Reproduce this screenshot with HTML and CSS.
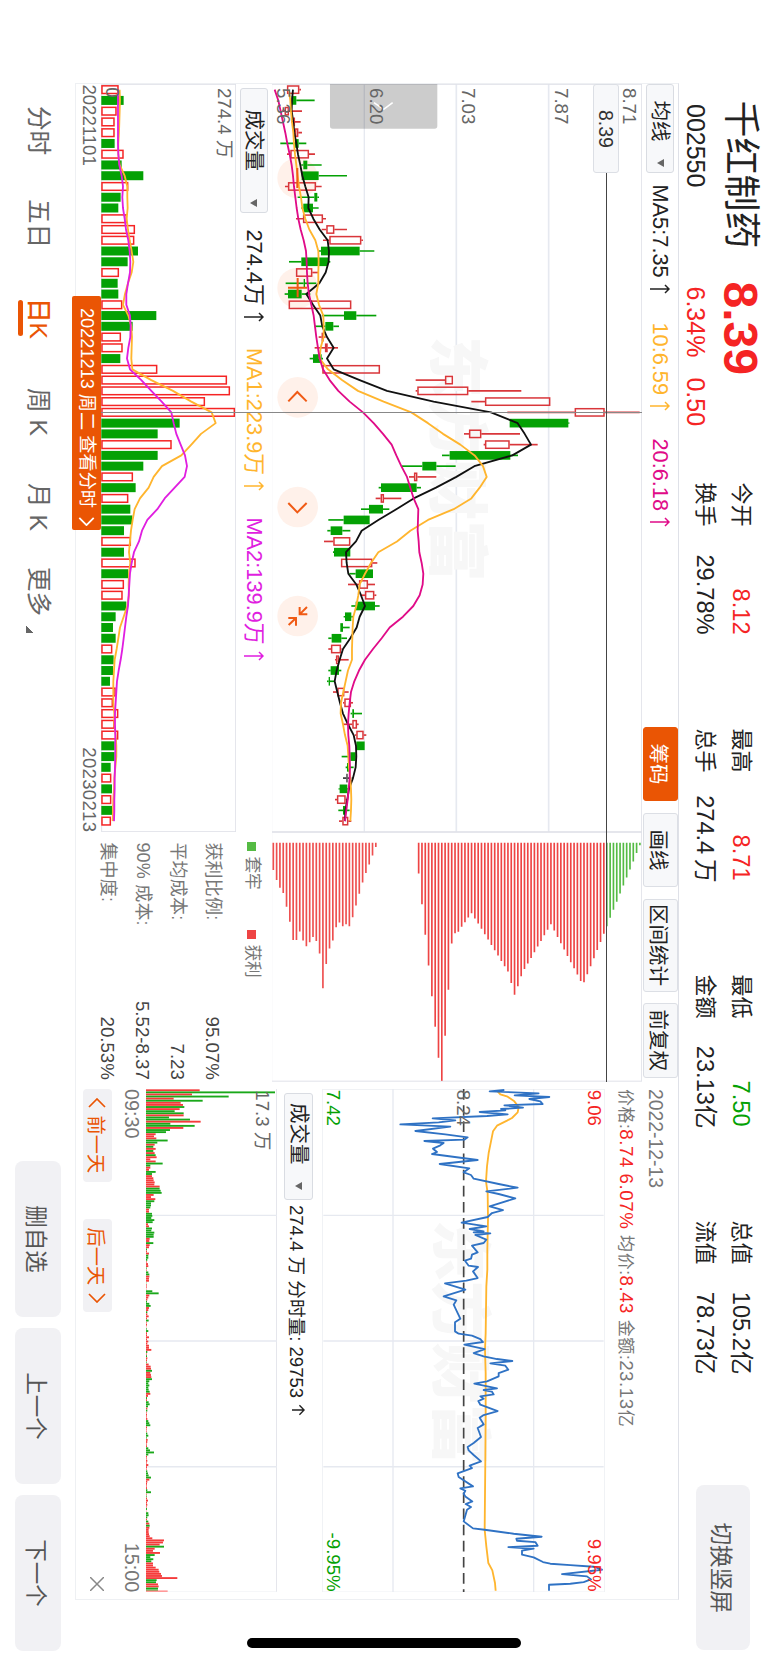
FILE: index.html
```html
<!DOCTYPE html>
<html lang="zh-CN">
<head>
    <meta charset="UTF-8">
    <meta name="viewport" content="width=device-width, initial-scale=1.0">
    <title>千红制药 002550</title>
    <link rel="stylesheet" href="styles.css">
</head>
<body>
    <div class="phone">
    <div class="screen">
        <header class="header">
            <div class="stock">
                <div class="stock-top"><span class="name">千红制药</span><b class="price">8.39</b></div>
                <div class="stock-sub"><span class="code">002550</span><span class="red">6.34%</span><span class="red change">0.50</span></div>
            </div>
            <ul class="stats">
                <li>
                    <p><span>今开</span><em class="red">8.12</em></p>
                    <p><span>换手</span><em>29.78%</em></p>
                </li>
                <li>
                    <p><span>最高</span><em class="red">8.71</em></p>
                    <p><span>总手</span><em class="wide">274.4&thinsp;万</em></p>
                </li>
                <li>
                    <p><span>最低</span><em class="green">7.50</em></p>
                    <p><span>金额</span><em class="wide">23.13亿</em></p>
                </li>
                <li>
                    <p><span>总值</span><em class="wide">105.2亿</em></p>
                    <p><span>流值</span><em class="wide">78.73亿</em></p>
                </li>
            </ul>
            <button class="switch">切换竖屏</button>
        </header>

        <main class="panel">
            <section class="left">
                <div class="toolbar">
                    <button class="select ma">均线<i class="caret"></i></button>
                    <span class="ind ind-a">MA5:7.35<svg class="up" viewBox="0 0 10 20"><path d="M5 20V1M1 5L5 1L9 5"/></svg></span>
                    <span class="ind ind-b yellow">10:6.59<svg class="up" viewBox="0 0 10 20"><path d="M5 20V1M1 5L5 1L9 5"/></svg></span>
                    <span class="ind ind-c pink">20:6.18<svg class="up" viewBox="0 0 10 20"><path d="M5 20V1M1 5L5 1L9 5"/></svg></span>
                    <div class="tools">
                        <button class="on">筹码</button>
                        <button>画线</button>
                        <button class="w93">区间统计</button>
                        <button>前复权</button>
                    </div>
                </div>
                <div class="row k-row">
                    <svg id="kline" class="k-chart" viewBox="0 0 2244 1112" preserveAspectRatio="none"></svg>
                    <svg id="chips" class="chip-chart" viewBox="0 0 747 1112" preserveAspectRatio="none"></svg>
                </div>
                <div class="row">
                    <div class="vol">
                        <div class="toolbar vol-bar">
                            <button class="select vol-select">成交量<i class="caret"></i></button>
                            <span class="ind ind-d">274.4万<svg class="up" viewBox="0 0 10 20"><path d="M5 20V1M1 5L5 1L9 5"/></svg></span>
                            <span class="ind ind-e yellow">MA1:223.9万<svg class="up" viewBox="0 0 10 20"><path d="M5 20V1M1 5L5 1L9 5"/></svg></span>
                            <span class="ind ind-f purple">MA2:139.9万<svg class="up" viewBox="0 0 10 20"><path d="M5 20V1M1 5L5 1L9 5"/></svg></span>
                        </div>
                        <svg id="volume" class="vol-chart" viewBox="0 0 2244 404" preserveAspectRatio="none"></svg>
                        <div class="dates"><span>20221101</span><span>20230213</span></div>
                    </div>
                    <div class="chip-info">
                        <div class="legend"><span class="lg">套牢</span><span class="lr">获利</span></div>
                        <dl>
                            <div><dt>获利比例:</dt><dd>95.07%</dd></div>
                            <div><dt>平均成本:</dt><dd>7.23</dd></div>
                            <div><dt>90% 成本:</dt><dd>5.52-8.37</dd></div>
                            <div><dt>集中度:</dt><dd>20.53%</dd></div>
                        </dl>
                    </div>
                </div>
                <div class="cross-v"></div>
                <div class="cross-h"></div>
                <div class="cross-price">8.39</div>
                <div class="cross-date">20221213 周二 查看分时<svg viewBox="0 0 10 18"><path d="M1 1L9 9L1 17"/></svg></div>
            </section>

            <section class="right">
                <p class="day">2022-12-13</p>
                <p class="info"><span>价格:</span><b>8.74 6.07%</b> <span>均价:</span><b>8.43</b> <span>金额:</span>23.13<span class="yi">亿</span></p>
                <svg id="trend" class="trend" viewBox="0 0 1510 849" preserveAspectRatio="none"></svg>
                <div class="trend-bar">
                    <button class="select trend-select">成交量<i class="caret"></i></button>
                    <span>274.4 万 分时量: 29753</span>
                    <svg class="up-s" viewBox="0 0 12 14"><path d="M6 14V1M1 6L6 1L11 6"/></svg>
                </div>
                <svg id="trendVol" class="trend-vol" viewBox="0 0 1510 395" preserveAspectRatio="none"></svg>
                <div class="times"><span>09:30</span><span>15:00</span></div>
                <div class="days">
                    <button><svg viewBox="0 0 10 18"><path d="M9 1L1 9L9 17"/></svg>前一天</button>
                    <button>后一天<svg viewBox="0 0 10 18"><path d="M1 1L9 9L1 17"/></svg></button>
                    <svg class="close" viewBox="0 0 14 14"><path d="M0 0L14 14M14 0L0 14"/></svg>
                </div>
            </section>
        </main>

        <footer class="footer">
            <ul class="tabs">
                <li>分时</li>
                <li>五日</li>
                <li class="active">日K</li>
                <li>周 K</li>
                <li>月 K</li>
                <li class="more">更多</li>
            </ul>
            <div class="actions">
                <button>删自选</button>
                <button>上一个</button>
                <button>下一个</button>
            </div>
        </footer>
        <div class="home"></div>
    </div>
    </div>

    <script src="script.js"></script>
</body>
</html>
```
FILE: styles.css
```css
* {
    margin: 0;
    padding: 0;
    list-style: none;
    box-sizing: border-box;
}
body {
    background-color: #fff;
    font-family: "Liberation Sans", "Noto Sans CJK SC", sans-serif;
    color: #222;
}
button {
    border: none;
    background: none;
    font-family: inherit;
    color: inherit;
    white-space: nowrap;
}
em, i {
    font-style: normal;
}
svg {
    display: block;
    flex: none;
}
path {
    fill: none;
    stroke: currentColor;
}
.red {
    color: #f52424;
}
.green {
    color: #04a104;
}
.yellow {
    color: #ffb52e;
}
.pink {
    color: #e00b88;
}
.purple {
    color: #e01ee0;
}

/* landscape layout shown on a portrait screen */
.phone {
    position: relative;
    width: 768px;
    height: 1662px;
    overflow: hidden;
}
.screen {
    position: relative;
    display: flex;
    flex-direction: column;
    width: 1662px;
    height: 768px;
    transform-origin: 0 0;
    transform: translateX(768px) rotate(90deg);
}

.header {
    display: flex;
    height: 89px;
    padding-left: 104px;
    white-space: nowrap;
}
.stock {
    width: 378.5px;
}
.stock-top {
    display: flex;
    align-items: center;
    height: 56px;
}
.name {
    margin-left: -3.5px;
    font-size: 37px;
    line-height: 56px;
}
.price {
    margin-left: 33px;
    font-size: 48px;
    line-height: 56px;
    color: #f52424;
}
.stock-sub {
    display: flex;
    font-size: 25px;
    line-height: 32px;
}
.code {
    width: 182.5px;
}
.change {
    margin-left: 20px;
}
.stats {
    display: flex;
    padding-top: 9px;
    font-size: 23.6px;
    gap: 94px;
}
.stats li {
    width: 152px;
}
.stats p {
    display: flex;
    justify-content: space-between;
    height: 36px;
    line-height: 36px;
}
.stats p span {
    font-size: 22px;
}
.stats .wide {
    margin-right: -2px;
}
.switch {
    width: 165.3px;
    height: 54px;
    margin: 18px 0 0 112.5px;
    border-radius: 8px;
    background-color: #f1f1f4;
    font-size: 22.6px;
    color: #555;
}

.panel {
    display: flex;
    height: 603.5px;
    width: 1516.5px;
    margin-left: 83.4px;
    border: 1px solid #e6e8ee;
    border-color: #dfe1e8 #eef0f3 #eef0f3 #eef0f3;
}
.left {
    position: relative;
    width: 997.5px;
    flex: none;
}
.row {
    display: flex;
}
.toolbar {
    display: flex;
    align-items: center;
    height: 35.6px;
}
.select {
    display: flex;
    align-items: center;
    justify-content: space-between;
    height: 28.5px;
    border: 1px solid #d9dce2;
    border-radius: 3px;
    background-color: #f7f8fa;
    font-size: 20.5px;
    line-height: 24px;
    color: #222;
}
.caret {
    border: 4px solid transparent;
    border-top: 7px solid #666;
    border-bottom: none;
}
.ma {
    width: 89px;
    padding: 0 5px 0 15px;
}
.ind {
    display: flex;
    align-items: center;
    font-size: 21.8px;
    line-height: 28px;
    white-space: nowrap;
}
.up {
    width: 10px;
    height: 20px;
    margin-left: 6px;
    stroke-width: 1.5;
}
.ind-a {
    width: 138px;
    margin-left: 11px;
}
.ind-b {
    width: 116px;
}
.tools {
    display: flex;
    gap: 11.2px;
    margin-left: auto;
    padding-right: 4.3px;
}
.tools button {
    padding: 0 0;
    width: 74.8px;
    height: 35.4px;
    border: 1px solid #dcdfe5;
    border-radius: 3px;
    background-color: #f7f8fa;
    font-size: 20.5px;
}
.tools .w93 {
    width: 93px;
}
.tools .on {
    border-color: #ea5504;
    background-color: #ea5504;
    color: #fff;
}
.k-chart {
    width: 748px;
    height: 370.7px;
}
.chip-chart {
    width: 249.5px;
    height: 370.7px;
}
.vol {
    width: 748px;
}
.vol-select {
    width: 125px;
    margin-left: 4px;
    padding: 0 5px 0 20px;
}
.ind-d {
    width: 118.5px;
    margin-left: 16px;
}
.ind-e {
    width: 169.5px;
}
.vol-chart {
    width: 748px;
    height: 134.7px;
}
.dates {
    display: flex;
    justify-content: space-between;
    font-size: 18.6px;
    line-height: 23px;
    color: #666;
}
.dates span + span {
    letter-spacing: .3px;
}
.chip-info {
    flex: 1;
    padding: 3px 2px 0 10px;
}
.legend {
    display: flex;
    height: 34px;
    line-height: 34px;
    font-size: 16.7px;
    color: #777;
}
.legend span {
    display: flex;
    align-items: center;
    width: 88px;
}
.legend span::before {
    content: '';
    width: 9px;
    height: 9px;
    margin-right: 5px;
    background-color: #55bb44;
}
.legend .lr::before {
    background-color: #ee4444;
}
dl div {
    display: flex;
    justify-content: space-between;
    height: 35px;
    line-height: 35px;
}
dl {
    padding-top: 5px;
}
dt {
    font-size: 18px;
    letter-spacing: .2px;
    color: #777;
}
dd {
    font-size: 18.7px;
    color: #444;
}

/* crosshair over the charts */
.cross-v {
    position: absolute;
    left: 328px;
    top: 35.6px;
    width: 1px;
    height: 541px;
    background-color: #888;
}
.cross-h {
    position: absolute;
    left: 89px;
    top: 71px;
    width: 909px;
    height: 1px;
    background-color: #444;
}
.cross-price {
    position: absolute;
    left: 0;
    top: 58.5px;
    width: 89px;
    height: 26.5px;
    border: 1px solid #dcdfe5;
    border-radius: 3px;
    background-color: #f7f8fa;
    font-size: 19.5px;
    line-height: 24px;
    text-align: center;
    color: #333;
}
.cross-date {
    position: absolute;
    left: 211.5px;
    top: 577px;
    display: flex;
    align-items: center;
    width: 234px;
    height: 28.5px;
    padding-left: 12px;
    border-radius: 2px;
    background-color: #ea5504;
    font-size: 18.2px;
    line-height: 28px;
    white-space: nowrap;
    color: #fff;
}
.cross-date svg {
    width: 9px;
    height: 17px;
    margin: 0 4px 0 auto;
    stroke-width: 2;
}

.right {
    flex: 1;
    padding: 8px 7px 0 7px;
}
.day {
    height: 29px;
    font-size: 19.4px;
    line-height: 29px;
    color: #777;
}
.info {
    height: 35.8px;
    font-size: 18.7px;
    line-height: 30px;
    letter-spacing: .55px;
    white-space: nowrap;
    color: #777;
}
.info span {
    font-size: 17px;
}
.info b {
    font-weight: normal;
    color: #f52424;
}
.trend {
    width: 503.4px;
    height: 283px;
}
.trend-bar {
    display: flex;
    align-items: center;
    height: 45px;
    padding: 10px 0 8px 4px;
    font-size: 18.6px;
    white-space: nowrap;
}
.trend-select {
    width: 107px;
    margin-right: 5px;
    padding: 0 9px 0 9px;
}
.up-s {
    width: 12px;
    height: 13px;
    margin-left: 6px;
    stroke-width: 1.5;
}
.trend-vol {
    width: 503.4px;
    height: 131.7px;
}
.times {
    display: flex;
    justify-content: space-between;
    height: 34px;
    font-size: 19.8px;
    line-height: 29px;
    color: #777;
}
.days {
    display: flex;
    align-items: center;
    gap: 37px;
}
.days button {
    display: flex;
    align-items: center;
    justify-content: center;
    gap: 8px;
    width: 93px;
    height: 29px;
    border-radius: 4px;
    background-color: #f1f1f4;
    font-size: 19.2px;
    color: #ea5504;
}
.days button svg {
    width: 10px;
    height: 18px;
    stroke-width: 1.7;
}
.close {
    width: 14px;
    height: 14px;
    margin: 0 1px 0 auto;
    stroke-width: 1.5;
    color: #888;
}

.footer {
    display: flex;
    justify-content: space-between;
    padding: 14.5px 11px 0 106px;
}
.tabs {
    display: flex;
    font-size: 24.6px;
    line-height: 46px;
    color: #666;
    white-space: nowrap;
}
.tabs li {
    width: 95px;
}
.tabs li:first-child {
    width: 93px;
}
.tabs .active {
    position: relative;
    width: 94px;
    padding-left: 4px;
    font-weight: 500;
    color: #ea5504;
}
.active::after {
    content: '';
    position: absolute;
    left: 6px;
    bottom: 3px;
    width: 36px;
    height: 5px;
    border-radius: 3px;
    background-color: #ea5504;
}
.tabs li:nth-child(5) {
    width: 84px;
}
.more::after {
    content: '';
    display: inline-block;
    width: 7px;
    height: 8px;
    margin-left: 10px;
    background: linear-gradient(135deg, transparent 50%, #666 50%);
    vertical-align: -4px;
}
.actions {
    display: flex;
    gap: 11px;
}
.actions button {
    width: 156px;
    height: 46px;
    border-radius: 8px;
    background-color: #f1f1f4;
    font-size: 22.5px;
    color: #555;
}
.home {
    position: absolute;
    left: 1638px;
    top: 246.5px;
    width: 10px;
    height: 274.5px;
    border-radius: 5px;
    background-color: #000;
}

/* chart text */
.axis {
    font-size: 56px;
    fill: #666;
}
.axis.up-limit {
    fill: #f52424;
}
.axis.down-limit {
    fill: #04a104;
}
.mark {
    font-family: "Noto Sans CJK SC", sans-serif;
    font-weight: 900;
    font-size: 184px;
    fill: #f7f7f7;
}
```
FILE: script.js
```js
var NS = 'http://www.w3.org/2000/svg';
var RED = '#d9363a', GREEN = '#04a104';

function el(parent, tag, attrs, text) {
    var node = document.createElementNS(NS, tag);
    for (var key in attrs) {
        node.setAttribute(key, attrs[key]);
    }
    if (text) node.textContent = text;
    parent.appendChild(node);
    return node;
}
function line(parent, x1, y1, x2, y2, color, width) {
    return el(parent, 'line', {x1: x1, y1: y1, x2: x2, y2: y2, stroke: color, 'stroke-width': width || 4});
}
function frame(parent, w, h, color) {
    el(parent, 'rect', {x: 1, y: 1, width: w - 2, height: h - 2, fill: 'none', stroke: color, 'stroke-width': 3});
}
function curve(parent, points, color, width) {
    return el(parent, 'polyline', {points: points.join(' '), fill: 'none', stroke: color, 'stroke-width': width || 5.5, 'stroke-linejoin': 'round'});
}
function series(values, top) {
    return values.map(function (v, i) {
        return (17 + i * STEP).toFixed(1) + ',' + (top - v);
    });
}

// K line: colour, low, body low, body high, high
var STEP = 32.27, K_TOP = 1927;
var candles = [
    'r 862 862 899 904', 'g 876 876 890 945', 'r 850 855 868 907', 'r 875 882 886 903', 'r 880 886 896 907',
    'g 842 886 897 920', 'r 862 872 928 946', 'g 905 911 923 966', 'g 906 906 957 1042', 'r 856 865 949 966',
    'g 894 944 953 958', 'g 905 911 940 957', 'r 889 910 970 979', 'r 966 980 1004 1042', 'r 970 989 1085 1090',
    'g 955 964 1080 1124', 'g 868 905 985 992', 'r 889 889 938 957', 'g 858 912 916 950', 'g 855 865 906 932',
    'r 867 867 1055 1055', 'g 967 1033 1070 1130', 'g 945 977 1001 1018', 'r 957 966 972 978', 'r 945 976 984 1015',
    'g 930 940 966 970', 'r 968 968 1141 1141', 'r 1248 1336 1360 1360', 'r 1248 1253 1406 1565', 'r 1415 1456 1652 1652',
    'r 1523 1725 1815 1920', 'g 1530 1530 1706 1709', 'r 1393 1408 1445 1561', 'r 1452 1456 1530 1614', 'g 1327 1350 1532 1555',
    'g 1206 1268 1310 1368', 'r 1228 1243 1253 1310', 'g 1137 1144 1251 1264', 'r 1128 1143 1153 1205', 'g 1084 1108 1150 1169',
    'g 986 1032 1110 1110', 'g 983 993 1028 1052', 'r 973 1001 1052 1052', 'g 1000 1003 1052 1052', 'r 1024 1024 1118 1133',
    'g 1049 1068 1120 1120', 'r 1045 1078 1105 1126', 'r 1085 1096 1124 1130', 'g 1055 1068 1126 1140', 'g 1032 1036 1055 1062',
    'g 1022 1022 1030 1050', 'g 986 996 1025 1042', 'r 986 994 1024 1026', 'r 1006 1009 1018 1047', 'g 986 993 1018 1025',
    'g 982 987 991 1003', 'r 1000 1013 1034 1047', 'r 1030 1034 1054 1060', 'g 1053 1058 1063 1087', 'r 1030 1058 1072 1077',
    'r 1066 1070 1092 1100', 'g 1070 1070 1095 1095', 'g 1026 1052 1068 1070', 'g 1038 1042 1050 1062', 'k 1030 1040 1044 1055',
    'g 1017 1020 1043 1050', 'r 1006 1012 1038 1045', 'g 1016 1030 1036 1050', 'r 1018 1028 1046 1055'
];
var ma5 = [880, 877, 876, 881, 884, 890, 895, 902, 908, 917, 927, 926, 941, 960, 984, 988, 987, 978, 959, 920, 940, 962, 968, 982, 1002, 982, 1002, 1080, 1162, 1302, 1474, 1554, 1575, 1594, 1538, 1424, 1370, 1309, 1242, 1190, 1136, 1086, 1069, 1039, 1041, 1046, 1070, 1084, 1096, 1080, 1071, 1052, 1030, 1020, 1011, 1005, 1013, 1021, 1030, 1045, 1062, 1069, 1070, 1068, 1060, 1048, 1043, 1037, 1036];
var ma10 = [868, 872, 874, 877, 881, 883, 886, 890, 894, 898, 904, 908, 917, 929, 947, 956, 957, 956, 956, 950, 958, 971, 972, 972, 963, 960, 985, 1027, 1075, 1152, 1235, 1285, 1330, 1382, 1425, 1450, 1461, 1440, 1415, 1362, 1285, 1232, 1192, 1136, 1114, 1096, 1080, 1076, 1070, 1061, 1059, 1058, 1057, 1057, 1045, 1038, 1031, 1024, 1023, 1030, 1036, 1044, 1046, 1048, 1052, 1054, 1055, 1054, 1052];
var ma20 = [825, 836, 843, 850, 857, 863, 870, 876, 880, 883, 887, 891, 896, 903, 912, 919, 921, 922, 924, 928, 935, 942, 946, 950, 955, 960, 970, 990, 1016, 1050, 1090, 1122, 1150, 1176, 1190, 1205, 1222, 1232, 1242, 1256, 1255, 1254, 1257, 1259, 1266, 1271, 1269, 1260, 1241, 1210, 1170, 1146, 1120, 1096, 1078, 1064, 1054, 1050, 1047, 1045, 1046, 1049, 1050, 1051, 1050, 1047, 1044, 1040, 1036];

var k = document.getElementById('kline');
line(k, 0, K_TOP - 1094, 2244, K_TOP - 1094, '#e6e9f0');
line(k, 0, K_TOP - 1370, 2244, K_TOP - 1370, '#e6e9f0', 5);
line(k, 0, K_TOP - 1647, 2244, K_TOP - 1647, '#e6e9f0', 5);
frame(k, 2244, 1112, '#e0e2e9');
el(k, 'text', {x: 757, y: 620, 'class': 'mark'}, '东方财富');
[282, 612, 940, 1269, 1596].forEach(function (x) {
    el(k, 'circle', {cx: x, cy: 1033, r: 61, fill: '#fff1ea'});
});
candles.forEach(function (row, i) {
    var d = row.split(' ');
    var x = 17 + i * STEP;
    var color = {r: RED, g: GREEN, k: '#333'}[d[0]];
    line(k, x, K_TOP - d[1], x, K_TOP - d[2], color, 5);
    line(k, x, K_TOP - d[3], x, K_TOP - d[4], color, 5);
    if (d[0] === 'r') {
        el(k, 'rect', {x: x - 11, y: K_TOP - d[3] + 2, width: 22, height: Math.max(d[3] - d[2] - 4, 2), fill: 'none', stroke: color, 'stroke-width': 4.5});
    } else {
        el(k, 'rect', {x: x - 13, y: K_TOP - d[3], width: 26, height: d[3] - d[2], fill: color});
    }
});
curve(k, series(ma5, K_TOP), '#111');
curve(k, series(ma10, K_TOP), '#ffb52e');
curve(k, series(ma20, K_TOP), '#e00b88');
// zoom and move buttons
[
    'M252 1034H312',
    'M582 1033H640M611 1005V1062',
    'M952 1061L924 1034L952 1006',
    'M1257 1061L1285 1034L1257 1006',
    'M1569 1005L1591 1027M1569 1027H1591V1004M1623 1060L1602 1038M1602 1061V1038H1625'
].forEach(function (d) {
    el(k, 'path', {d: d, style: 'stroke:#f05a14', 'stroke-width': 6});
});
// drawer handle
el(k, 'path', {d: 'M0 614H126Q134 614 134 622V928Q134 936 126 936H0Z', style: 'stroke:none;fill:#000;fill-opacity:.2'});
el(k, 'path', {d: 'M56 748L76 775L56 804', style: 'stroke:#fff', 'stroke-width': 5});
[['8.71', 58], ['7.87', 261], ['7.03', 539], ['6.20', 817], ['5.36', 1094]].forEach(function (t) {
    el(k, 'text', {x: 12, y: t[1], 'class': 'axis'}, t[0]);
});

// chips
var chips = document.getElementById('chips');
var low = [152, 182, 205, 221, 262, 307, 361, 361, 336, 363, 380, 368, 352, 364, 402, 506, 433, 387, 363, 323, 309, 320, 314, 320, 293, 258, 223, 189, 161, 135, 108, 83];
var high = [162, 254, 346, 438, 530, 621, 714, 783, 648, 510, 372, 341, 337, 322, 308, 294, 281, 297, 312, 328, 344, 360, 376, 392, 408, 424, 440, 456, 490, 525, 500, 470, 448, 432, 415, 398, 381, 364, 347, 331, 314, 333, 352, 371, 390, 409, 428, 446, 465, 484, 488, 464, 440, 416, 391, 367, 343];
var locked = [320, 295, 271, 247, 222, 198, 174, 150, 126, 101, 78];
function bars(list, start, color) {
    list.forEach(function (v, i) {
        var y = K_TOP - start - i * 9.92;
        line(chips, 32, y, v - 38, y, color, 5);
    });
}
frame(chips, 747, 1112, '#e0e2e9');
bars(low, 821, '#ee4f4f');
bars(high, 1257, '#ee4444');
bars(locked, 1821.5, '#55bb44');

// volume
var V_TOP = 709;
var volumes = [357, 372, 351, 345, 345, 345, 372, 366, 431, 386, 363, 356, 382, 406, 404, 415, 384, 358, 354, 356, 368, 470, 399, 364, 369, 362, 473, 682, 691, 616, 706, 540, 474, 516, 474, 431, 400, 408, 386, 392, 398, 373, 394, 373, 408, 386, 373, 369, 380, 348, 340, 348, 338, 342, 340, 331, 348, 340, 356, 345, 356, 345, 345, 333, 335, 337, 335, 337, 334];
// days whose volume colour differs from the candle
var volGreen = {32: true, 42: false, 53: true, 58: false};
var vma1 = [360, 361, 360, 359, 358, 356, 356, 360, 375, 383, 383, 384, 381, 385, 390, 396, 401, 396, 385, 376, 370, 386, 395, 397, 396, 395, 398, 455, 520, 575, 636, 648, 604, 575, 545, 487, 462, 447, 421, 405, 399, 394, 391, 388, 392, 388, 387, 388, 383, 372, 361, 356, 351, 345, 343, 341, 341, 341, 344, 344, 348, 350, 350, 347, 344, 343, 341, 340, 339];
var vma2 = [355, 355, 355, 355, 355, 355, 356, 359, 366, 370, 368, 370, 375, 379, 386, 390, 392, 391, 385, 380, 380, 391, 393, 392, 386, 382, 391, 425, 455, 486, 515, 522, 530, 543, 556, 562, 555, 525, 495, 473, 443, 427, 418, 403, 396, 391, 389, 387, 385, 380, 376, 372, 368, 363, 357, 352, 350, 348, 346, 346, 347, 347, 347, 346, 345, 345, 344, 344, 343];

var vol = document.getElementById('volume');
frame(vol, 2244, 404, '#e0e2e9');
volumes.forEach(function (v, i) {
    var x = 17 + i * STEP;
    var green = i in volGreen ? volGreen[i] : candles[i].charAt(0) === 'g';
    if (green) {
        el(vol, 'rect', {x: x - 13.5, y: V_TOP - v, width: 27, height: v - 305, fill: GREEN});
    } else {
        el(vol, 'rect', {x: x - 11.5, y: V_TOP - v + 2, width: 23, height: v - 309, fill: '#fff', stroke: '#f52424', 'stroke-width': 4.5});
    }
});
curve(vol, series(vma1, V_TOP), '#ffb52e');
curve(vol, series(vma2, V_TOP), '#e01ee0');
el(vol, 'text', {x: 12, y: 54, 'class': 'axis'}, '274.4 万');
el(vol, 'text', {x: 10, y: 389, 'class': 'axis'}, '0');

// intraday, price then minute
var T_TOP = 1816;
var price = [
    [1514, 3], [1470, 7], [1617, 13], [1545, 19], [1649, 24], [1589, 30], [1622, 37], [1629, 45], [1514, 49], [1570, 56], [1504, 60], [1517, 64], [1440, 69], [1524, 76], [1462, 81],
    [1299, 88], [1367, 94], [1317, 100], [1202, 106], [1352, 113], [1247, 126], [1337, 136], [1404, 145], [1394, 152], [1274, 156], [1332, 162], [1322, 169], [1300, 179], [1312, 189], [1297, 195],
    [1434, 213], [1320, 225], [1409, 238], [1392, 250], [1414, 258], [1422, 269], [1497, 285], [1554, 296], [1460, 307], [1497, 315], [1547, 328], [1470, 352], [1510, 363], [1477, 372], [1464, 384],
    [1386, 401], [1460, 412], [1410, 420], [1452, 427], [1422, 430], [1472, 433], [1427, 438], [1460, 452], [1452, 462], [1417, 470], [1434, 490], [1417, 497], [1414, 509], [1396, 515], [1407, 530],
    [1435, 534], [1420, 547], [1434, 567], [1400, 575], [1336, 583], [1397, 602], [1332, 622], [1370, 634], [1362, 647], [1374, 672], [1382, 689], [1366, 700], [1366, 727], [1377, 734], [1417, 740],
    [1442, 750], [1450, 759], [1394, 767], [1455, 780], [1422, 792], [1452, 802], [1492, 810], [1538, 816], [1472, 823], [1517, 830], [1526, 842], [1497, 852], [1497, 862], [1462, 877], [1424, 884],
    [1492, 898], [1452, 903], [1477, 908], [1482, 916], [1442, 922], [1452, 929], [1436, 936], [1442, 947], [1494, 966], [1452, 978], [1440, 986], [1452, 1006], [1434, 1017], [1444, 1044], [1422, 1062],
    [1404, 1074], [1407, 1084], [1422, 1098], [1444, 1117], [1410, 1130], [1417, 1137], [1374, 1153], [1377, 1164], [1420, 1192], [1382, 1198], [1397, 1205], [1392, 1214], [1397, 1222], [1418, 1237],
    [1398, 1245], [1414, 1254], [1402, 1262], [1392, 1297], [1420, 1318], [1455, 1322], [1542, 1334], [1626, 1343], [1550, 1349], [1552, 1355], [1607, 1359], [1614, 1370], [1526, 1374], [1602, 1379],
    [1567, 1385], [1567, 1397], [1602, 1405], [1630, 1419], [1652, 1424], [1712, 1428], [1782, 1433], [1807, 1442], [1687, 1455], [1762, 1462], [1774, 1471], [1752, 1479], [1712, 1484], [1648, 1487], [1648, 1505]
];
var avg = [[1494, 7], [1502, 16], [1524, 23], [1544, 37], [1557, 54], [1554, 70], [1537, 87], [1522, 95], [1492, 110], [1480, 127], [1474, 157], [1467, 192], [1462, 232], [1459, 277], [1464, 312], [1465, 392], [1463, 482], [1463, 542], [1460, 592], [1458, 732], [1456, 782], [1458, 852], [1458, 972], [1457, 1112], [1455, 1322], [1460, 1372], [1466, 1422], [1478, 1444], [1486, 1482], [1488, 1505]];
function path(list) {
    return list.map(function (p) {
        return p[1] + ',' + (T_TOP - p[0]);
    });
}

var t = document.getElementById('trend');
frame(t, 1510, 849, '#eef0f3');
el(t, 'text', {x: 392, y: 500, 'class': 'mark'}, '东方财富');
[T_TOP - 1602, T_TOP - 1180].forEach(function (y) {
    line(t, 0, y, 1510, y, '#e6e9f0');
});
[379, 756, 1133].forEach(function (x) {
    line(t, x, 4, x, 845, '#e6e9f0');
});
line(t, 0, T_TOP - 1392, 1510, T_TOP - 1392, '#444', 5).setAttribute('stroke-dasharray', '32 16.4');
curve(t, path(avg), '#ffb52e');
curve(t, path(price), '#2f72c4');
el(t, 'text', {x: 2, y: 52, 'class': 'axis up-limit'}, '9.06');
el(t, 'text', {x: 1508, y: 52, 'text-anchor': 'end', 'class': 'axis up-limit'}, '9.95%');
el(t, 'text', {x: 2, y: 444, 'class': 'axis'}, '8.24');
el(t, 'text', {x: 2, y: 834, 'class': 'axis down-limit'}, '7.42');
el(t, 'text', {x: 1508, y: 834, 'text-anchor': 'end', 'class': 'axis down-limit'}, '-9.95%');

// intraday volume, one bar a minute
var minutes = ('r163 g389 r140 g250 r85 g172 r106 r113 g117 r103 g88 g115 r115 g71 g134 r166 g75 g148 r114 g74 g62 r31 r26 r33 g67 g36 r28 g24 r31 g24 r28 g31 r34 r15 r31 g52 g15 r15 r11 g31 g20 r20 r24 r25 r28 r27 r43 g43 g46 g49 r25 r17 r30 g27 g17 g17 g15 r11 r11 g20 g21 g18 ' +
    'g27 g22 r8 r11 g20 g18 g27 g25 g25 r13 r12 g24 r13 r11 g5 r5 r11 g9 g9 g6 r4 r8 r9 g4 r4 g9 g12 r12 r11 r11 g3 r4 r4 r3 g21 g40 r12 r9 r6 g5 g12 g16 r11 r9 g6 r6 r10 r5 g10 r4 r5 r3 g4 g9 r5 r5 r11 r5 r9 r6 r11 r11 r18 g6 r4 g5 r6 r5 g4 r10 r16 r17 g20 r15 r17 r18 g20 g12 g9 g12 g9 g10 g13 r15 r8 g5 r5 g10 g13 g8 r6 g6 r4 r5 r4 r6 g9 g12 g15 r5 r4 r4 g6 g9 g4 r7 r6 r4 r5 g9 g14 g26 g9 r5 r4 r6 r4 r9 r5 r4 g6 g8 g10 g17 r12 r6 r5 r4 r5 g6 g17 r4 g4 r5 r8 r5 r6 r4 g5 r3 g9 g10 g6 r5 g9 r12 g13 ' +
    'r12 r10 r10 r11 r13 r21 r56 r53 r43 g56 r28 r23 r44 g28 g15 g24 g18 r23 r23 r31 r40 r42 r47 r50 r96 g34 g32 r38 r40 g38 g38 g40').split(' ');
var tv = document.getElementById('trendVol');
line(tv, 0, 1, 1510, 1, '#e0e2e9', 3);
line(tv, 1509, 0, 1509, 395, '#eef0f3', 3);
[379, 756, 1133].forEach(function (x) {
    line(tv, x, 0, x, 395, '#e6e9f0');
});
minutes.forEach(function (m, i) {
    var h = m.slice(1);
    el(tv, 'rect', {x: 1 + i * 6.28, y: 395 - h, width: 5.6, height: h, fill: m.charAt(0) === 'r' ? '#f53b3b' : '#1aa81a'});
});
el(tv, 'rect', {x: 1504, y: 328, width: 5, height: 67, fill: '#f99'});
el(tv, 'text', {x: 4, y: 62, 'class': 'axis'}, '17.3 万');
```
